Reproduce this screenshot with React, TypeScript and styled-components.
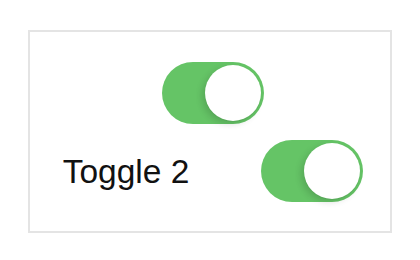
import React from "react";
import styled, { createGlobalStyle } from "styled-components";

const Global = createGlobalStyle`
  html, body { margin: 0; padding: 0; background: #ffffff; }
  body { font-family: "Liberation Sans", Arial, sans-serif; }
`;

const Page = styled.div`
  width: 420px;
  height: 260px;
  padding: 30px 0 0 28px;
  box-sizing: border-box;
`;

const Card = styled.div`
  width: 364px;
  height: 203px;
  box-sizing: border-box;
  border: 2px solid #e4e4e4;
  padding-left: 6px;
  display: flex;
  flex-direction: column;
  justify-content: center;
  align-items: center;
  gap: 16px;
`;

const Row = styled.div`
  display: flex;
  align-items: center;
  gap: 72px;
`;

const Label = styled.span`
  font-family: "Liberation Sans", Arial, sans-serif;
  font-size: 33.5px;
  color: #111111;
  padding-top: 2px;
`;

const Track = styled.button<{ $on: boolean }>`
  position: relative;
  width: 102px;
  height: 62px;
  border: none;
  padding: 0;
  border-radius: 31px;
  background: ${(p) => (p.$on ? "#65c466" : "#e9e9eb")};
  cursor: pointer;
  flex: none;
`;

const Knob = styled.span<{ $on: boolean }>`
  position: absolute;
  top: 3px;
  left: ${(p) => (p.$on ? "43px" : "3px")};
  width: 56px;
  height: 56px;
  border-radius: 50%;
  background: #ffffff;
  box-shadow: -3px 3px 7px rgba(0, 0, 0, 0.14), 0 1px 1px rgba(0, 0, 0, 0.04);
`;

const Toggle: React.FC<{ on: boolean }> = ({ on }) => (
  <Track $on={on} aria-pressed={on}>
    <Knob $on={on} />
  </Track>
);

export default function App() {
  return (
    <Page>
      <Global />
      <Card>
        <Row>
          <Toggle on />
        </Row>
        <Row>
          <Label>Toggle 2</Label>
          <Toggle on />
        </Row>
      </Card>
    </Page>
  );
}
